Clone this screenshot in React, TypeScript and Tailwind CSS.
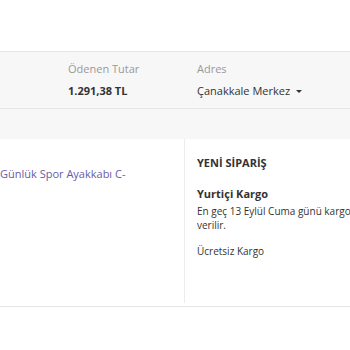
export default function App() {
  return (
    <div className="w-[350px] h-[350px] overflow-hidden bg-white font-['Open_Sans',sans-serif] text-[#333]">
      {/* top spacer */}
      <div className="h-[51px]" />

      {/* summary bar */}
      <div className="h-[58px] border-y border-[#e6e6e6] bg-[#f7f7f7] flex items-center">
        <div className="w-[68px] shrink-0" />
        <div className="w-[129px] shrink-0 flex flex-col gap-[2px]">
          <span className="text-[11px] leading-[20px] text-[#999]">Ödenen Tutar</span>
          <span className="text-[11px] leading-[20px] font-bold">1.291,38 TL</span>
        </div>
        <div className="flex flex-col gap-[2px]">
          <span className="text-[11px] leading-[20px] text-[#999]">Adres</span>
          <span className="text-[11px] leading-[20px] flex items-center gap-[6px]">
            Çanakkale Merkez
            <span className="w-0 h-0 border-x-[3px] border-x-transparent border-t-[3px] border-t-[#333]" />
          </span>
        </div>
      </div>

      <div className="h-[30px] bg-[#f7f7f7]" />

      {/* order row */}
      <div className="h-[168px] flex pb-[3px] border-b border-[#e6e6e6]">
        <div className="w-[184px] shrink-0 pt-[21px]">
          <span className="text-[11px] leading-[15px] text-[#6a5aa8] whitespace-nowrap">
            Günlük Spor Ayakkabı C-
          </span>
        </div>
        <div className="border-l border-[#ececec] pl-[12px] pt-[16px] w-[190px] shrink-0">
          <div className="text-[11px] leading-[15px] font-bold">YENİ SİPARİŞ</div>
          <div className="mt-[16px] text-[11px] leading-[15px] font-bold">Yurtiçi Kargo</div>
          <div className="mt-[3px] w-[175px] text-[10px] leading-[14px]">
            En geç 13 Eylül Cuma günü kargoya verilir.
          </div>
          <div className="mt-[12px] text-[10px] leading-[14px]">Ücretsiz Kargo</div>
        </div>
      </div>
    </div>
  );
}
